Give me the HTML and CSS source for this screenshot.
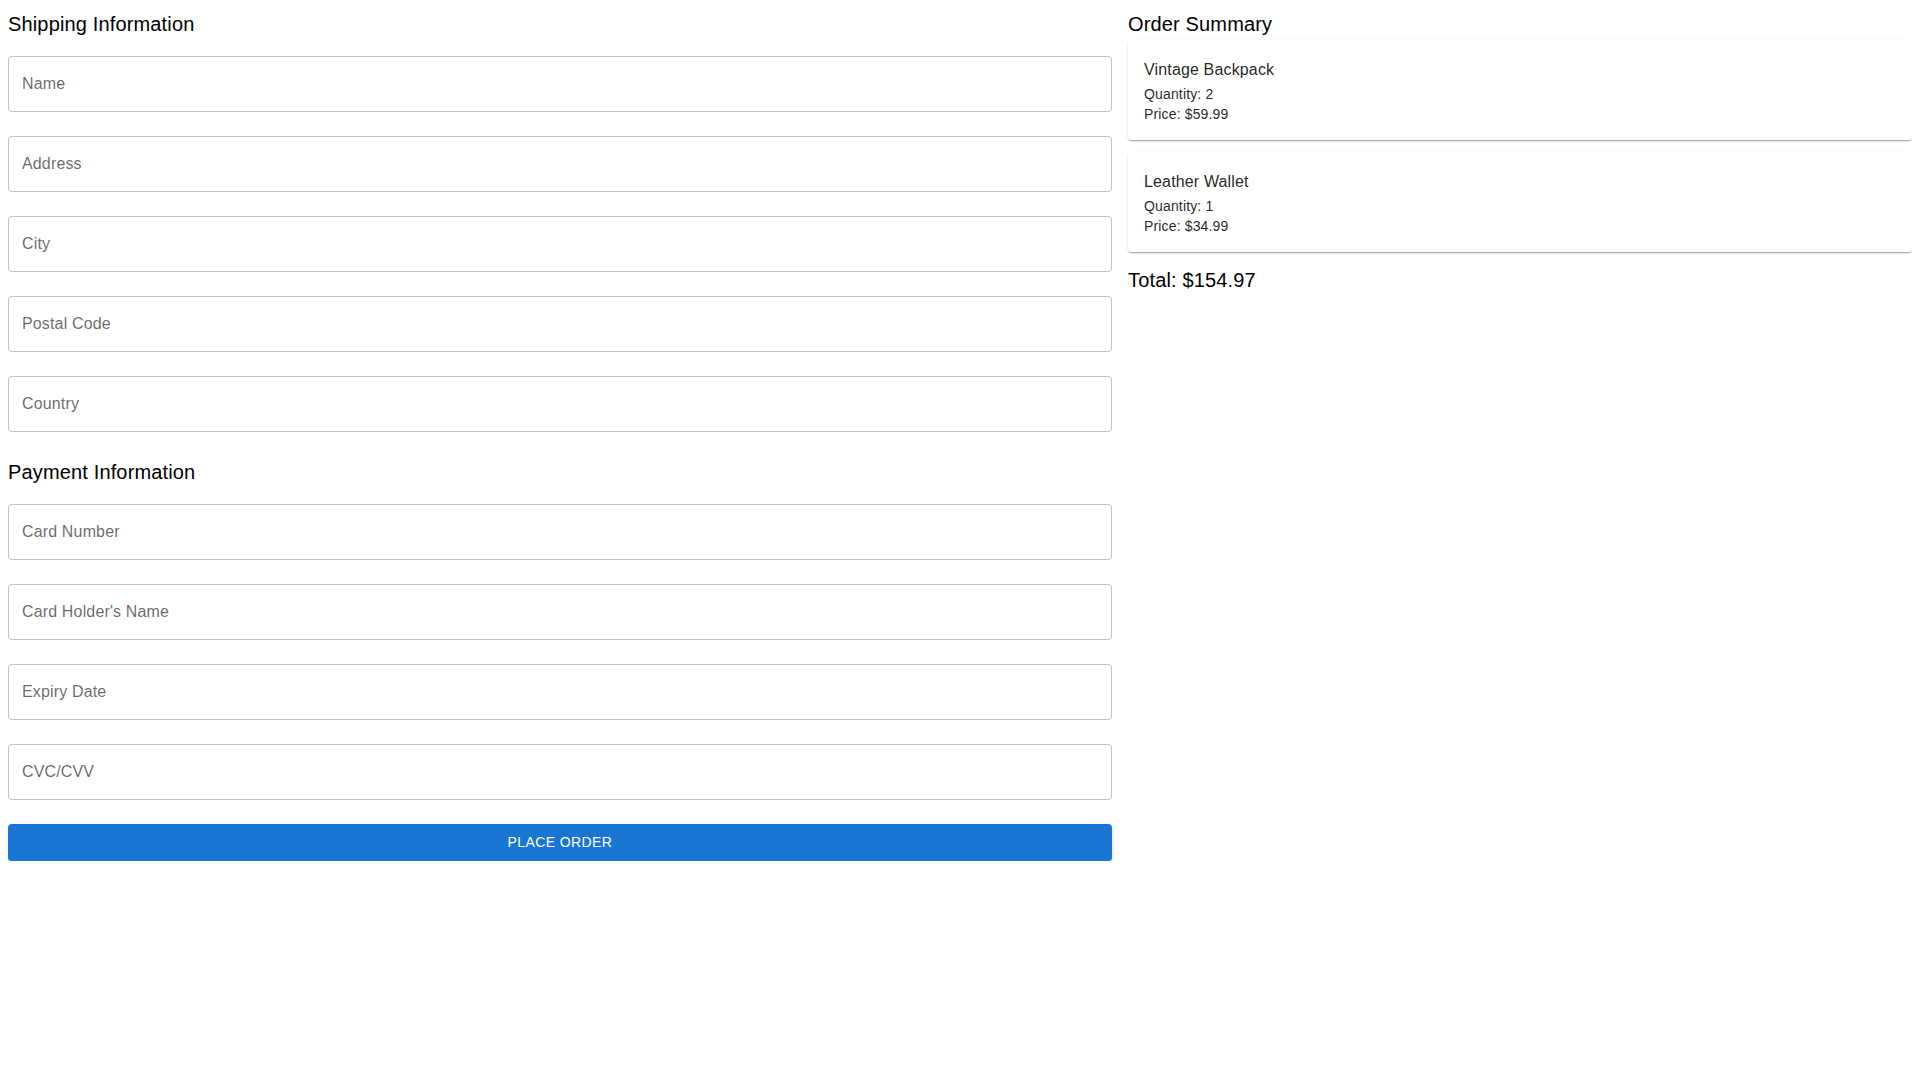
FILE: index.html
```html
<!DOCTYPE html>
<html lang="en">
<head>
<meta charset="utf-8">
<title>Checkout</title>
<link rel="stylesheet" href="styles.css">
</head>
<body>
<div class="layout">
  <section class="col-form">
    <h6 class="heading">Shipping Information</h6>
    <div class="field"><input type="text" placeholder="Name"></div>
    <div class="field"><input type="text" placeholder="Address"></div>
    <div class="field"><input type="text" placeholder="City"></div>
    <div class="field"><input type="text" placeholder="Postal Code"></div>
    <div class="field"><input type="text" placeholder="Country"></div>
    <h6 class="heading heading-spaced">Payment Information</h6>
    <div class="field"><input type="text" placeholder="Card Number"></div>
    <div class="field"><input type="text" placeholder="Card Holder's Name"></div>
    <div class="field"><input type="text" placeholder="Expiry Date"></div>
    <div class="field"><input type="text" placeholder="CVC/CVV"></div>
    <button class="btn-primary" type="button">Place Order</button>
  </section>
  <aside class="col-summary">
    <h6 class="heading">Order Summary</h6>
    <div class="card">
      <div class="card-title">Vintage Backpack</div>
      <div class="card-line">Quantity: 2</div>
      <div class="card-line">Price: $59.99</div>
    </div>
    <div class="card">
      <div class="card-title">Leather Wallet</div>
      <div class="card-line">Quantity: 1</div>
      <div class="card-line">Price: $34.99</div>
    </div>
    <h6 class="heading">Total: $154.97</h6>
  </aside>
</div>
</body>
</html>
```

FILE: styles.css
```css
* {
  box-sizing: border-box;
}

html, body {
  background: #ffffff;
}

body {
  margin: 8px;
  font-family: "Liberation Sans", Arial, Helvetica, sans-serif;
  color: #000000;
}

.layout {
  display: grid;
  grid-template-columns: 1104px 784px;
  column-gap: 16px;
}

.col-form,
.col-summary {
  display: flex;
  flex-direction: column;
  min-width: 0;
}

.heading {
  margin: 0;
  font-size: 20px;
  font-weight: 400;
  line-height: 32px;
  letter-spacing: 0.15px;
  color: #000000;
}

.heading-spaced {
  margin-top: 16px;
}

.field {
  margin-top: 16px;
  margin-bottom: 8px;
}

.field input {
  display: block;
  width: 100%;
  height: 56px;
  padding: 0 13px;
  border: 1px solid rgba(0, 0, 0, 0.23);
  border-radius: 4px;
  background: #ffffff;
  font-family: "Liberation Sans", Arial, Helvetica, sans-serif;
  font-size: 16px;
  letter-spacing: 0.15px;
  color: rgba(0, 0, 0, 0.87);
  outline: none;
}

.field input::placeholder {
  color: rgba(0, 0, 0, 0.6);
  opacity: 1;
}

.btn-primary {
  margin-top: 16px;
  height: 36.5px;
  padding: 6px 16px;
  border: none;
  border-radius: 4px;
  background: #1976d2;
  color: #ffffff;
  font-family: "Liberation Sans", Arial, Helvetica, sans-serif;
  font-size: 14px;
  font-weight: 400;
  line-height: 24.5px;
  letter-spacing: 0.4px;
  text-transform: uppercase;
  box-shadow: 0 3px 1px -2px rgba(0, 0, 0, 0.2), 0 2px 2px 0 rgba(0, 0, 0, 0.14), 0 1px 5px 0 rgba(0, 0, 0, 0.12);
  cursor: pointer;
}

.card {
  padding: 16px;
  margin-bottom: 12px;
  border-radius: 4px;
  background: #ffffff;
  color: rgba(0, 0, 0, 0.87);
  box-shadow: 0 2px 1px -1px rgba(0, 0, 0, 0.2), 0 1px 1px 0 rgba(0, 0, 0, 0.14), 0 1px 3px 0 rgba(0, 0, 0, 0.12);
}

.card-title {
  font-size: 16px;
  line-height: 28px;
  letter-spacing: 0.15px;
}

.card-line {
  font-size: 14px;
  line-height: 20px;
  letter-spacing: 0.15px;
}
```
